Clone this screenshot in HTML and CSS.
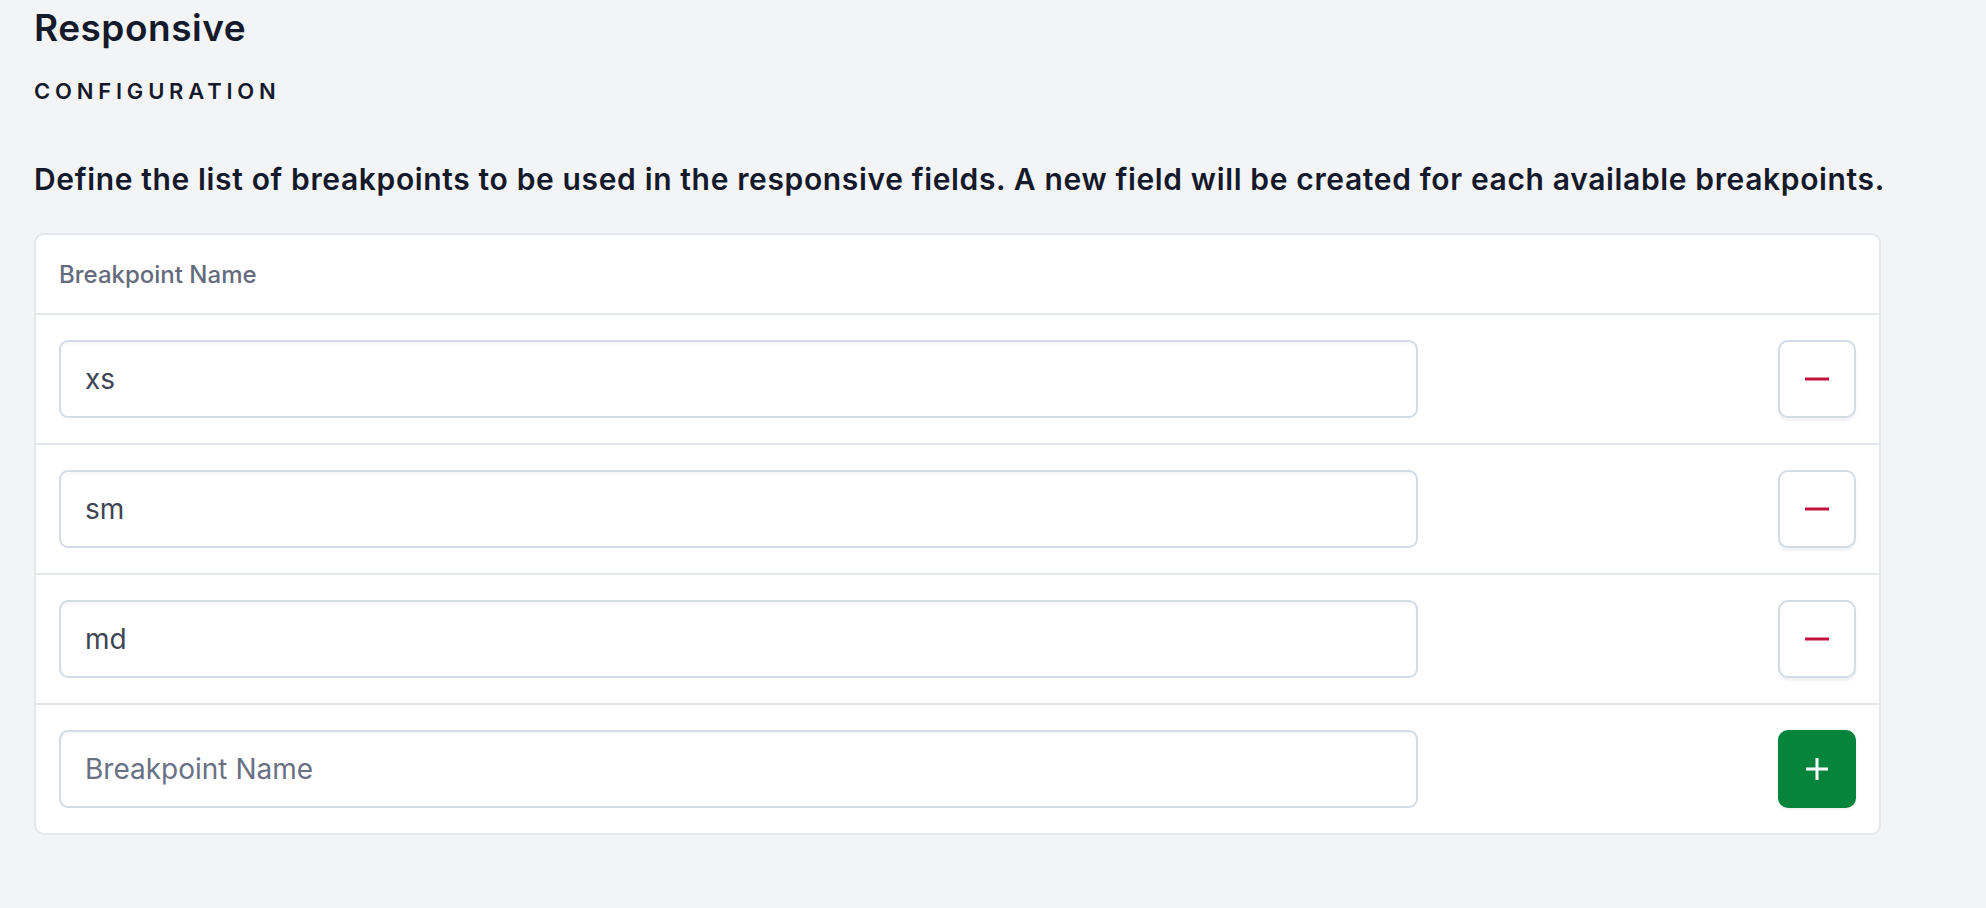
FILE: index.html
```html
<!DOCTYPE html>
<html lang="en">
<head>
  <meta charset="UTF-8" />
  <title>Responsive - Configuration</title>
  <link rel="stylesheet" href="styles.css">
</head>
<body>
  <main class="page">
    <h1 class="title">Responsive</h1>
    <h2 class="section-label">Configuration</h2>
    <p class="lead">Define the list of breakpoints to be used in the responsive fields. A new field will be created for each available breakpoints.</p>

    <div class="card">
      <div class="card-head">Breakpoint Name</div>

      <div class="row">
        <input class="field" type="text" value="xs">
        <button class="btn btn-remove" aria-label="Remove xs">
          <svg width="24" height="24" viewBox="0 0 24 24"><path d="M0 12h24" stroke="currentColor" stroke-width="3"/></svg>
        </button>
      </div>

      <div class="row">
        <input class="field" type="text" value="sm">
        <button class="btn btn-remove" aria-label="Remove sm">
          <svg width="24" height="24" viewBox="0 0 24 24"><path d="M0 12h24" stroke="currentColor" stroke-width="3"/></svg>
        </button>
      </div>

      <div class="row">
        <input class="field" type="text" value="md">
        <button class="btn btn-remove" aria-label="Remove md">
          <svg width="24" height="24" viewBox="0 0 24 24"><path d="M0 12h24" stroke="currentColor" stroke-width="3"/></svg>
        </button>
      </div>

      <div class="row">
        <input class="field" type="text" placeholder="Breakpoint Name">
        <button class="btn btn-add" aria-label="Add breakpoint">
          <svg width="22" height="22" viewBox="0 0 22 22"><path d="M0 11h22M11 0v22" stroke="currentColor" stroke-width="3"/></svg>
        </button>
      </div>
    </div>
  </main>
</body>
</html>
```

FILE: styles.css
```css
body {
  margin: 0;
  font-family: Inter, "Noto Sans", sans-serif;
  background: #f3f4f6;
  color: #151b2c;
}
.page {
  width: 1847px;
  padding: 5px 34px 0;
}
.title {
  margin: 0;
  font-size: 37px;
  line-height: 45px;
  font-weight: 600;
  letter-spacing: 0.5px;
  color: #141a2b;
}
.section-label {
  margin: 25px 0 0;
  font-size: 22px;
  line-height: 32px;
  font-weight: 600;
  letter-spacing: 4.8px;
  text-transform: uppercase;
  color: #141a2b;
}
.lead {
  margin: 52px 0 0;
  font-size: 30px;
  line-height: 40px;
  font-weight: 600;
  letter-spacing: 0.64px;
  white-space: nowrap;
  color: #141a2b;
}
.card {
  margin-top: 34px;
  background: #fff;
  border: 2px solid #e4e7eb;
  border-radius: 10px;
}
.card-head {
  display: flex;
  align-items: center;
  height: 78px;
  padding: 0 23px;
  font-size: 24px;
  font-weight: 500;
  color: #646b7d;
}
.row {
  display: grid;
  grid-template-columns: 1359px 1fr;
  align-items: center;
  padding: 25px 23px;
  border-top: 2px solid #e4e7eb;
}
.field {
  box-sizing: border-box;
  height: 78px;
  width: 100%;
  padding: 0 24px;
  border: 2px solid #d3dce4;
  border-radius: 9px;
  background: #fff;
  box-shadow: inset 0 3px 3px rgba(15, 30, 60, 0.03);
  font-family: inherit;
  font-size: 28px;
  color: #3e4555;
  outline: none;
}
.field::placeholder {
  color: #697185;
}
.btn {
  justify-self: end;
  box-sizing: border-box;
  width: 78px;
  height: 78px;
  display: flex;
  align-items: center;
  justify-content: center;
  border-radius: 10px;
  padding: 0;
  cursor: pointer;
}
.btn-remove {
  background: #fff;
  border: 2px solid #d3dce4;
  box-shadow: 0 3px 2px rgba(15, 30, 60, 0.06);
  color: #c2123d;
}
.btn-add {
  background: #07843b;
  border: none;
  box-shadow: 0 2px 2px rgba(15, 30, 60, 0.06);
  color: #fff;
}
```
